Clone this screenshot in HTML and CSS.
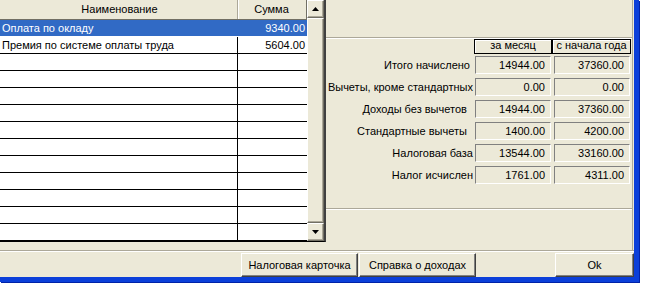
FILE: index.html
```html
<!DOCTYPE html>
<html lang="ru">
<head>
  <meta charset="UTF-8">
  <title>Расчет налога</title>
  <link rel="stylesheet" href="styles.css">
</head>
<body>
  <div class="window">
    <div class="main">
      <div class="grid-frame">
        <div class="grid">
          <div class="grid-head">
            <div class="col-name">Наименование</div>
            <div class="col-sum">Сумма</div>
          </div>
          <div class="grid-row selected">
            <div class="col-name">Оплата по окладу</div>
            <div class="col-sum">9340.00</div>
          </div>
          <div class="grid-row">
            <div class="col-name">Премия по системе оплаты труда</div>
            <div class="col-sum">5604.00</div>
          </div>
          <div class="grid-row"><div class="col-name"></div><div class="col-sum"></div></div>
          <div class="grid-row"><div class="col-name"></div><div class="col-sum"></div></div>
          <div class="grid-row"><div class="col-name"></div><div class="col-sum"></div></div>
          <div class="grid-row"><div class="col-name"></div><div class="col-sum"></div></div>
          <div class="grid-row"><div class="col-name"></div><div class="col-sum"></div></div>
          <div class="grid-row"><div class="col-name"></div><div class="col-sum"></div></div>
          <div class="grid-row"><div class="col-name"></div><div class="col-sum"></div></div>
          <div class="grid-row"><div class="col-name"></div><div class="col-sum"></div></div>
          <div class="grid-row"><div class="col-name"></div><div class="col-sum"></div></div>
          <div class="grid-row"><div class="col-name"></div><div class="col-sum"></div></div>
          <div class="grid-row"><div class="col-name"></div><div class="col-sum"></div></div>
        </div>
        <div class="scrollbar">
          <div class="scroll-btn">
            <svg width="7" height="4" viewBox="0 0 7 4"><path d="M3.5 0 L7 4 L0 4 Z" fill="#000"/></svg>
          </div>
          <div class="scroll-thumb"></div>
          <div class="scroll-btn">
            <svg width="7" height="4" viewBox="0 0 7 4"><path d="M0 0 L7 0 L3.5 4 Z" fill="#000"/></svg>
          </div>
        </div>
      </div>

      <div class="panel">
        <div class="bevel"></div>
        <div class="totals">
          <div></div>
          <div class="head">за месяц</div>
          <div class="head">с начала года</div>

          <div class="label">Итого начислено&nbsp;</div>
          <div class="value">14944.00</div>
          <div class="value">37360.00</div>

          <div class="label">Вычеты, кроме стандартных</div>
          <div class="value">0.00</div>
          <div class="value">0.00</div>

          <div class="label">Доходы без вычетов&nbsp;&nbsp;</div>
          <div class="value">14944.00</div>
          <div class="value">37360.00</div>

          <div class="label">Стандартные вычеты&nbsp;&nbsp;</div>
          <div class="value">1400.00</div>
          <div class="value">4200.00</div>

          <div class="label">Налоговая база</div>
          <div class="value">13544.00</div>
          <div class="value">33160.00</div>

          <div class="label">Налог исчислен</div>
          <div class="value">1761.00</div>
          <div class="value">4311.00</div>
        </div>
        <div class="bevel bottom"></div>
      </div>
    </div>

    <div class="bevel"></div>

    <div class="buttons">
      <div class="btn-group">
        <button class="btn wide">Налоговая карточка</button>
        <button class="btn wide2">Справка о доходах</button>
      </div>
      <button class="btn ok">Ok</button>
    </div>
  </div>
</body>
</html>
```

FILE: styles.css
```css
/* Reset */
* {
  margin: 0;
  padding: 0;
  box-sizing: border-box;
}

body {
  width: 647px;
  height: 308px;
  background-color: #ffffff;
  font-family: 'Liberation Sans', Arial, sans-serif;
  font-size: 11px;
  color: #000;
  overflow: hidden;
}

/* Dialog window */
.window {
  width: 639px;
  height: 282px;
  background-color: #ECE9D8;
  border-right: 5px solid #0B3FD9;
  border-bottom: 5px solid #0B3FD9;
  box-shadow: 1px 1px 0 #0022A8;
  display: flex;
  flex-direction: column;
}

.main {
  display: flex;
  height: 250px;
  padding-right: 1px;
}

.bevel {
  height: 2px;
  border-top: 1px solid #ACA899;
  border-bottom: 1px solid #ffffff;
}

/* Grid */
.grid-frame {
  display: flex;
  width: 326px;
  height: 242px;
  border-right: 2px solid #404040;
  border-bottom: 1px solid #000;
}

.grid {
  width: 307px;
  background-color: #ffffff;
}

.grid-head {
  display: flex;
  height: 20px;
  line-height: 19px;
  background-color: #ECE9D8;
  border-bottom: 1px solid #716F64;
}

.grid-head .col-name {
  text-align: center;
  border-right: 1px solid #ACA899;
}

.grid-head .col-sum {
  text-align: center;
  border-left: 1px solid #ffffff;
  border-right: 1px solid #716F64;
}

.grid-row {
  display: flex;
  height: 17px;
  line-height: 16px;
  border-bottom: 1px solid #000;
}

.col-name {
  width: 238px;
  padding-left: 2px;
  border-right: 1px solid #000;
  white-space: nowrap;
  overflow: hidden;
}

.col-sum {
  width: 69px;
  padding-right: 2px;
  text-align: right;
}

.grid-row.selected {
  background-color: #316AC5;
  color: #ffffff;
  border-bottom-color: #ffffff;
}

.grid-row.selected .col-name {
  border-right-color: #316AC5;
}

/* Scrollbar */
.scrollbar {
  width: 17px;
  height: 241px;
  display: flex;
  flex-direction: column;
  background-color: #F5F4EE;
}

.scroll-btn,
.scroll-thumb {
  background-color: #ECE9D8;
  border: 1px solid;
  border-color: #ffffff #716F64 #716F64 #ffffff;
  box-shadow: inset -1px -1px #ACA899;
}

.scroll-btn {
  height: 18px;
  display: flex;
  align-items: center;
  justify-content: center;
}

.scroll-thumb {
  flex: 1;
}

/* Totals panel */
.panel {
  flex: 1;
  display: flex;
  flex-direction: column;
  padding-top: 37px;
  border-right: 1px solid #ACA899;
}

.totals {
  display: grid;
  grid-template-columns: 1fr 78px 79px;
  grid-template-rows: 13px repeat(6, 18px);
  row-gap: 4px;
  margin-right: 1px;
}

.totals .head {
  border: 1px solid #000;
  box-shadow: inset 1px 1px #ffffff;
  text-align: center;
  line-height: 11px;
  margin-bottom: -2px;
}

.totals .label {
  text-align: right;
  line-height: 18px;
  padding-right: 1px;
  white-space: nowrap;
}

.totals .value {
  margin: 0 1px;
  border: 1px solid;
  border-color: #808080 #ffffff #ffffff #808080;
  text-align: right;
  padding-right: 5px;
  line-height: 16px;
}

.totals .value:nth-child(3n) {
  margin: 0 1px 0 2px;
}

.bevel.bottom {
  margin-top: 24px;
}

/* Button bar */
.buttons {
  display: flex;
  justify-content: flex-end;
  height: 25px;
  padding-top: 1px;
}

.btn-group {
  display: flex;
  gap: 1px;
  margin-right: 79px;
}

.btn {
  height: 24px;
  font-family: 'Liberation Sans', Arial, sans-serif;
  font-size: 11px;
  color: #000;
  background-color: #ECE9D8;
  border: 1px solid;
  border-color: #ffffff #404040 #404040 #ffffff;
  box-shadow: inset -1px -1px #808080;
}

.btn.wide {
  width: 117px;
}

.btn.wide2 {
  width: 117px;
}

.btn.ok {
  width: 79px;
}
```
